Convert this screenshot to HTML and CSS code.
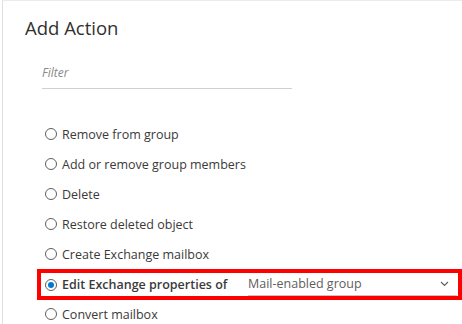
FILE: index.html
```html
<!DOCTYPE html>
<html lang="en">
<head>
    <meta charset="UTF-8">
    <title>Add Action</title>
    <link rel="stylesheet" href="styles.css">
</head>
<body>
    <div class="panel">
        <h2 class="panel-title">Add Action</h2>
        <div class="filter-box">
            <input class="filter-input" type="text" placeholder="Filter">
        </div>
        <div class="action-list">
            <label class="action-row"><span class="radio"></span><span class="action-label">Remove from group</span></label>
            <label class="action-row"><span class="radio"></span><span class="action-label">Add or remove group members</span></label>
            <label class="action-row"><span class="radio"></span><span class="action-label">Delete</span></label>
            <label class="action-row"><span class="radio"></span><span class="action-label">Restore deleted object</span></label>
            <label class="action-row"><span class="radio"></span><span class="action-label">Create Exchange mailbox</span></label>
            <label class="action-row highlight"><span class="radio checked"></span><span class="action-label strong">Edit Exchange properties of</span>
                <span class="select-box">
                    <span class="select-value">Mail-enabled group</span>
                    <svg class="chevron" width="9" height="6" viewBox="0 0 9 6"><path d="M1 1 L4.5 4.5 L8 1" fill="none" stroke="#605e5c" stroke-width="1.1"/></svg>
                </span>
            </label>
            <label class="action-row"><span class="radio"></span><span class="action-label">Convert mailbox</span></label>
        </div>
    </div>
</body>
</html>
```

FILE: styles.css
```css
body {
    margin: 0;
    font-family: "Open Sans", "Noto Sans", sans-serif;
    color: #323130;
    background-color: #fff;
    overflow: hidden;
}

.panel {
    margin-left: 2px;
    height: 100vh;
    border-left: 1px solid #e1dfdd;
    border-top: 1px solid #edebe9;
    padding-left: 22px;
    box-sizing: border-box;
}

.panel-title {
    margin: 13px 0 0 0;
    font-size: 18.5px;
    font-weight: 400;
    line-height: 28px;
}

.filter-box {
    margin: 15px 0 0 17px;
    width: 250px;
    border-bottom: 1px solid #d2d0ce;
}

.filter-input {
    display: block;
    width: 100%;
    height: 31px;
    border: none;
    padding: 0;
    font-family: inherit;
    font-size: 12px;
    font-style: italic;
    outline: none;
    box-sizing: border-box;
}

.filter-input::placeholder {
    color: #8a8886;
}

.action-list {
    margin: 30px 0 0 12px;
}

.action-row {
    display: flex;
    align-items: center;
    height: 30px;
    padding-left: 8px;
    font-size: 12.5px;
    color: #3b3a39;
}

.radio {
    width: 12px;
    height: 12px;
    border: 1px solid #605e5c;
    border-radius: 50%;
    box-sizing: border-box;
    margin-right: 5px;
    flex-shrink: 0;
    position: relative;
}

.radio.checked::after {
    content: "";
    position: absolute;
    left: 2px;
    top: 2px;
    width: 6px;
    height: 6px;
    border-radius: 50%;
    background-color: #0078d4;
}

.highlight {
    outline: 4px solid #f00;
    outline-offset: -4px;
    height: 31px;
    margin-bottom: -1px;
}

.action-label.strong {
    font-weight: 600;
    width: 186px;
    flex-shrink: 0;
}

.select-box {
    flex: 1;
    display: flex;
    align-items: center;
    justify-content: space-between;
    align-self: flex-end;
    height: 24px;
    margin: 0 5px 4px 0;
    border-bottom: 1px solid #c8c6c4;
    box-sizing: border-box;
}

.select-value {
    font-size: 12.5px;
    color: #605e5c;
}

.chevron {
    margin-right: 8px;
}
```
